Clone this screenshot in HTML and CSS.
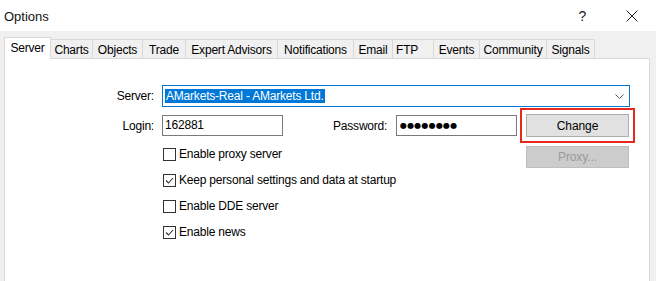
FILE: index.html
```html
<!DOCTYPE html>
<html>
<head>
<meta charset="utf-8">
<link rel="stylesheet" href="styles.css">
</head>
<body>
<div class="window">
  <div class="titlebar">
    <span class="title">Options</span>
    <div class="title-actions">
      <span class="help">?</span>
      <svg class="close" width="12" height="12" viewBox="0 0 12 12"><path d="M0.5 0.5 L11.5 11.5 M11.5 0.5 L0.5 11.5" stroke="#222" stroke-width="1" fill="none"/></svg>
    </div>
  </div>
  <div class="tabs">
    <div class="tab active">Server</div>
    <div class="tab">Charts</div>
    <div class="tab">Objects</div>
    <div class="tab">Trade</div>
    <div class="tab">Expert Advisors</div>
    <div class="tab">Notifications</div>
    <div class="tab">Email</div>
    <div class="tab tab-left">FTP</div>
    <div class="tab">Events</div>
    <div class="tab">Community</div>
    <div class="tab">Signals</div>
  </div>
  <div class="panel">
    <div class="row server-row">
      <label class="label">Server:</label>
      <div class="combo">
        <span class="combo-sel">AMarkets-Real - AMarkets Ltd.</span>
        <svg class="chev" width="9" height="5" viewBox="0 0 9 5"><path d="M0.5 0.5 L4.5 4.5 L8.5 0.5" stroke="#555" stroke-width="1" fill="none"/></svg>
      </div>
    </div>
    <div class="row main-row">
      <div class="left-col">
        <div class="fields">
          <label class="label">Login:</label>
          <div class="input">162881</div>
          <label class="pw-label">Password:</label>
          <div class="input pw">●●●●●●●●</div>
        </div>
        <div class="checks">
          <div class="check"><span class="box"></span><span>Enable proxy server</span></div>
          <div class="check"><span class="box"><svg width="11" height="11" viewBox="0 0 11 11"><path d="M2 5.5 L4.5 8 L9 3" stroke="#333" stroke-width="1.1" fill="none"/></svg></span><span>Keep personal settings and data at startup</span></div>
          <div class="check"><span class="box"></span><span>Enable DDE server</span></div>
          <div class="check"><span class="box"><svg width="11" height="11" viewBox="0 0 11 11"><path d="M2 5.5 L4.5 8 L9 3" stroke="#333" stroke-width="1.1" fill="none"/></svg></span><span>Enable news</span></div>
        </div>
      </div>
      <div class="btn-col">
        <button class="btn highlight">Change</button>
        <button class="btn disabled">Proxy...</button>
      </div>
    </div>
  </div>
</div>
</body>
</html>
```
FILE: styles.css
```css
* { box-sizing: border-box; }
html, body {
  margin: 0;
  padding: 0;
}
body {
  width: 656px;
  height: 281px;
  overflow: hidden;
  background: #f0f0f0;
  font-family: "Liberation Sans", Arial, sans-serif;
  font-size: 12px;
  letter-spacing: -0.2px;
  color: #000;
}
.window {
  display: flex;
  flex-direction: column;
  height: 281px;
}
.titlebar {
  height: 31px;
  background: #fff;
  display: flex;
  align-items: center;
  padding-left: 4px;
  flex: none;
}
.title {
  font-size: 13px;
  letter-spacing: 0;
  color: #111;
  padding-top: 1px;
}
.title-actions {
  margin-left: auto;
  display: flex;
  align-items: center;
  margin-right: 18px;
}
.help {
  font-size: 14px;
  color: #222;
  margin-right: 40px;
}
.close { display: block; }
.tabs {
  flex: none;
  display: grid;
  grid-template-columns: 47px 42px 50px 43px 92px 76px 39px 41px 46px 67px 48px;
  align-items: end;
  padding: 6px 0 0 4px;
  height: 27px;
}
.tab {
  height: 19px;
  border-top: 1px solid #d9d9d9;
  border-right: 1px solid #d9d9d9;
  background: #f0f0f0;
  text-align: center;
  line-height: 16px;
  padding-top: 2px;
  white-space: nowrap;
  overflow: hidden;
}
.tab:first-child { border-left: 1px solid #d9d9d9; }
.tab-left { text-align: left; padding-left: 3px; }
.tab.active {
  height: 22px;
  background: #fff;
  margin-bottom: -1px;
  position: relative;
  z-index: 1;
}
.panel {
  flex: 1;
  margin: 0 6px 0 4px;
  background: #fff;
  border: 1px solid #d9d9d9;
  border-bottom: none;
}
.row { display: flex; }
.server-row {
  margin-top: 26px;
  align-items: center;
}
.label {
  width: 150px;
  margin-right: 7px;
  text-align: right;
  padding-right: 1px;
}
.combo {
  width: 468px;
  height: 22px;
  border: 1px solid #0078d7;
  display: flex;
  align-items: center;
  padding-left: 2px;
  padding-right: 5px;
}
.combo-sel {
  background: #0078d7;
  color: #fff;
  line-height: 14px;
  height: 14px;
  padding: 0 1px;
}
.chev { margin-left: auto; display: block; }
.main-row {
  margin-top: 8px;
  align-items: flex-start;
}
.left-col {
  display: flex;
  flex-direction: column;
}
.fields {
  display: flex;
  align-items: center;
}
.input {
  width: 121px;
  height: 21px;
  border: 1px solid #7a7a7a;
  padding-left: 2px;
  line-height: 19px;
}
.pw-label {
  margin-left: 50px;
  width: 63px;
}
.pw {
  font-family: "DejaVu Sans", sans-serif;
  font-size: 8px;
  letter-spacing: 0.2px;
  padding-left: 3px;
}
.checks {
  margin-top: 5px;
  padding-left: 158px;
  display: flex;
  flex-direction: column;
}
.check {
  height: 26px;
  display: flex;
  align-items: center;
}
.box {
  width: 13px;
  height: 13px;
  border: 1px solid #333;
  background: #fff;
  margin-right: 3px;
  display: flex;
  align-items: center;
  justify-content: center;
}
.box svg { display: block; }
.btn-col {
  margin-left: 9px;
  margin-top: -1px;
  display: flex;
  flex-direction: column;
  gap: 9px;
}
.btn {
  width: 103px;
  height: 23px;
  font-family: "Liberation Sans", Arial, sans-serif;
  font-size: 12px;
  letter-spacing: -0.1px;
  padding: 0;
  background: #e1e1e1;
  border: 1px solid #adadad;
  color: #000;
}
.highlight {
  outline: 2px solid #e8281d;
  outline-offset: 4px;
}
.disabled {
  height: 22px;
  background: #cccccc;
  border-color: #bfbfbf;
  color: #9a9a9a;
}
```
